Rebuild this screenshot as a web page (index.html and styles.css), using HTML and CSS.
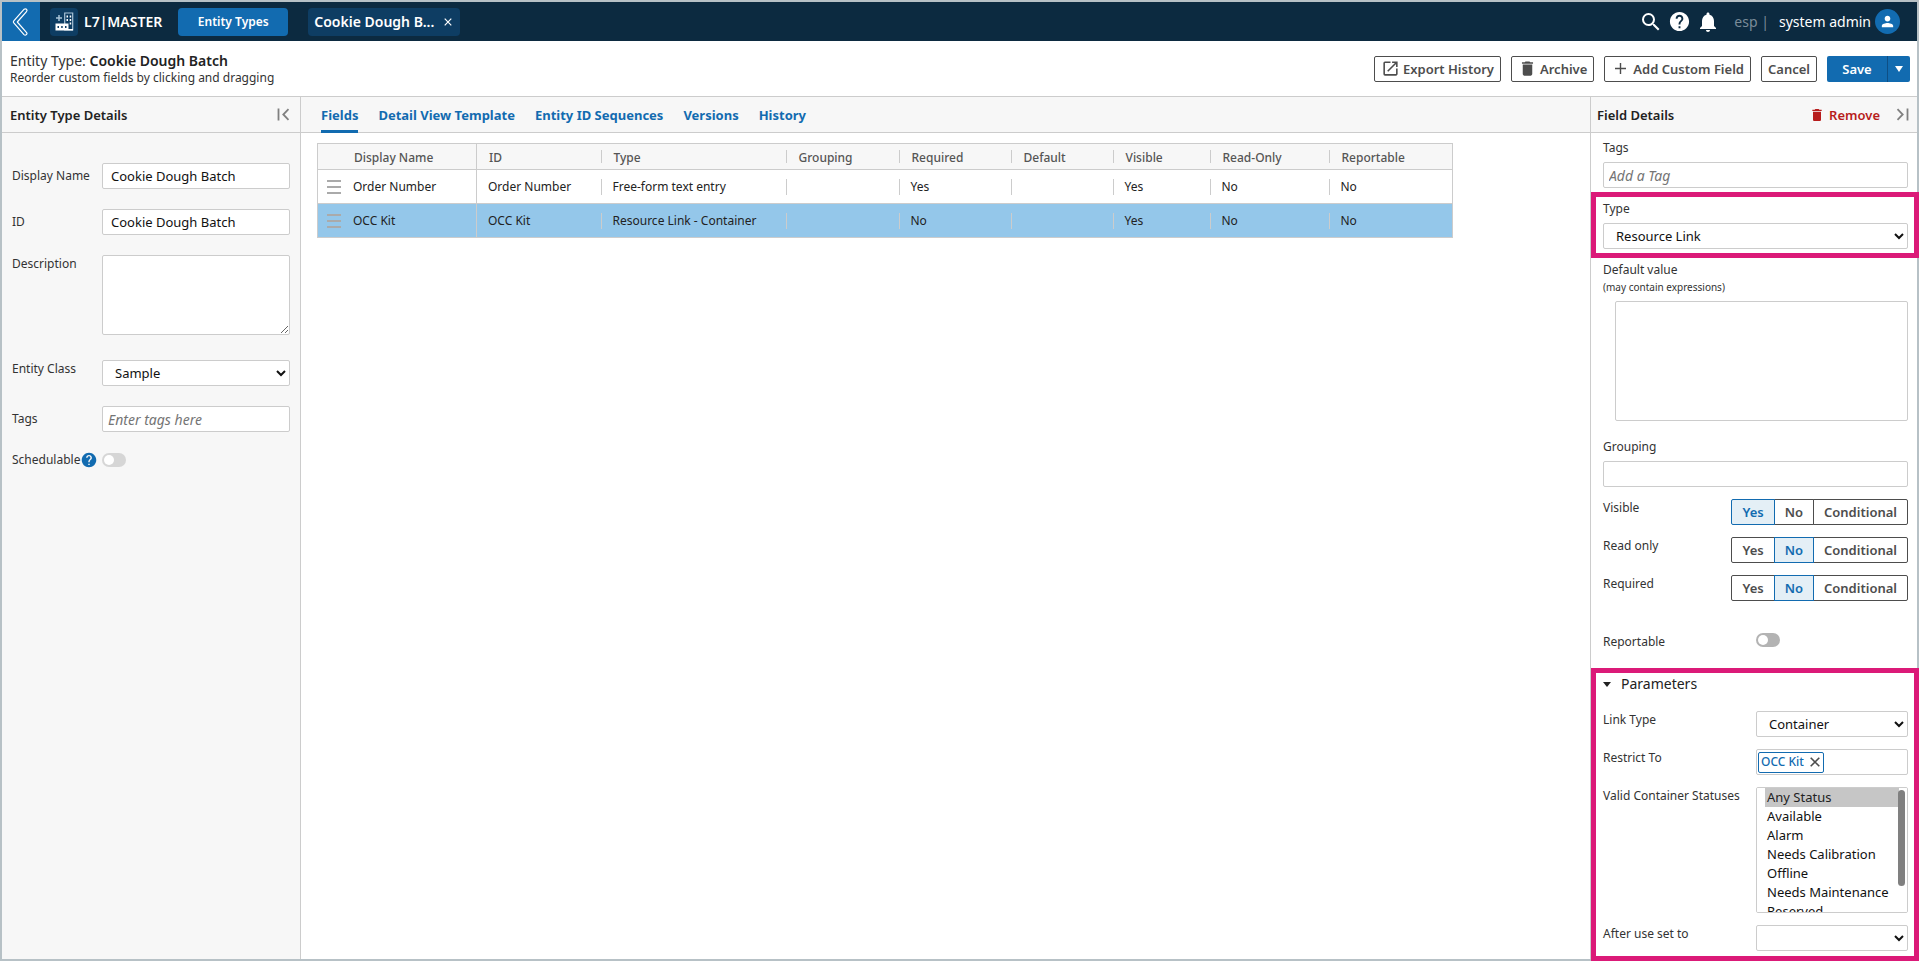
FILE: index.html
```html
<!DOCTYPE html>
<html lang="en">
<head>
<meta charset="utf-8">
<title>Entity Type: Cookie Dough Batch</title>
<link rel="stylesheet" href="styles.css">
</head>
<body>
<div class="app">
  <header class="topbar">
    <button class="back" aria-label="Back">
      <svg width="18" height="30" viewBox="0 0 18 30" fill="none" stroke="#fff" stroke-width="1.200" stroke-linejoin="round"><path d="M12.2 2.2 1.8 13.8q-.9 1 0 2.1L12 27.6q1.200 1 2.400 0t0-2.300L5.300 15 14.500 4.600q1.100-1.300 0-2.300t-2.300-.1Z"/></svg>
    </button>
    <span class="brand-icon">
      <svg width="19" height="19" viewBox="0 0 19 19"><path d="M1 6h6M4 3v6" stroke="#a9c4d8" stroke-width="1.500" fill="none"/><path d="M9.700 1h8v17h-8z" fill="none" stroke="#a9c4d8" stroke-width="1.200"/><path fill="#fff" d="M11.500 3.500h1.500v2h-1.500zM14.700 3.500h1.500v2h-1.500zM11.500 7h1.500v2h-1.500zM14.700 7h1.500v2h-1.500zM14.700 10.500h1.500v2h-1.500z"/><path d="M.5 11.500h13v7H.5zM13 17h5v1.500h-5z" fill="#fff"/><path fill="#0e3d63" d="M2.500 14h1.500v2H2.500zM6.200 14h1.500v2H6.200zM10 14h1.500v2H10z"/></svg>
    </span>
    <span class="brand">L7|MASTER</span>
    <button class="nav-button">Entity Types</button>
    <div class="nav-tab"><span>Cookie Dough B...</span><button class="tab-close" aria-label="Close tab"><svg width="8" height="8" viewBox="0 0 8 8" stroke="#fff" stroke-width="1.200"><path d="M.7.700l6.600 6.600M7.300.700.700 7.300"/></svg></button></div>
    <div class="top-actions">
      <button class="icon-button" aria-label="Search"><svg width="24" height="24" viewBox="0 0 24 24" fill="#fff"><path d="M15.500 14h-.79l-.28-.27A6.471 6.471 0 0 0 16 9.500 6.500 6.500 0 1 0 9.500 16c1.610 0 3.090-.59 4.230-1.570l.27.28v.79l5 4.990L20.490 19l-4.990-5zm-6 0C7.010 14 5 11.990 5 9.500S7.010 5 9.500 5 14 7.010 14 9.500 11.990 14 9.500 14z"/></svg></button>
      <button class="icon-button" aria-label="Help"><svg width="23" height="23" viewBox="0 0 24 24" fill="#fff"><path d="M12 2C6.480 2 2 6.480 2 12s4.480 10 10 10 10-4.480 10-10S17.520 2 12 2zm1 17h-2v-2h2v2zm2.070-7.750-.9.920C13.450 12.900 13 13.500 13 15h-2v-.5c0-1.100.45-2.100 1.170-2.830l1.240-1.260c.37-.36.59-.86.59-1.410 0-1.100-.9-2-2-2s-2 .9-2 2H8c0-2.210 1.790-4 4-4s4 1.790 4 4c0 .88-.36 1.680-.93 2.250z"/></svg></button>
      <button class="icon-button" aria-label="Notifications"><svg width="24" height="24" viewBox="0 0 24 24" fill="#fff"><path d="M12 22c1.100 0 2-.9 2-2h-4c0 1.100.89 2 2 2zm6-6v-5c0-3.070-1.640-5.640-4.500-6.320V4c0-.83-.67-1.500-1.500-1.500s-1.500.67-1.500 1.500v.68C7.630 5.360 6 7.920 6 11v5l-2 2v1h16v-1l-2-2z"/></svg></button>
      <span class="tenant">esp |</span>
      <span class="user">system admin</span>
      <span class="avatar"><svg width="17" height="17" viewBox="0 0 24 24" fill="#fff"><path d="M12 12c2.210 0 4-1.790 4-4s-1.790-4-4-4-4 1.790-4 4 1.790 4 4 4zm0 2c-2.670 0-8 1.340-8 4v2h16v-2c0-2.660-5.330-4-8-4z"/></svg></span>
    </div>
  </header>

  <section class="page-head">
    <div>
      <h1 class="page-title">Entity Type: <strong>Cookie Dough Batch</strong></h1>
      <p class="page-hint">Reorder custom fields by clicking and dragging</p>
    </div>
    <div class="page-actions">
      <button class="button"><svg width="19" height="19" viewBox="0 0 24 24" fill="#4d4d4d"><path d="M19 19H5V5h7V3H5a2 2 0 0 0-2 2v14a2 2 0 0 0 2 2h14c1.100 0 2-.9 2-2v-7h-2v7zM14 3v2h3.590l-9.830 9.830 1.410 1.410L19 6.410V10h2V3h-7z"/></svg>Export History</button>
      <button class="button"><svg width="19" height="19" viewBox="0 0 24 24" fill="#4d4d4d"><path d="M6 19c0 1.100.9 2 2 2h8c1.100 0 2-.9 2-2V7H6v12zM19 4h-3.500l-1-1h-5l-1 1H5v2h14V4z"/></svg>Archive</button>
      <button class="button"><svg width="19" height="19" viewBox="0 0 19 19" stroke="#4d4d4d" stroke-width="1.400"><path d="M9.500 4v11M4 9.500h11"/></svg>Add Custom Field</button>
      <button class="button">Cancel</button>
      <div class="split"><button class="save">Save</button><button class="save-more" aria-label="More save options"><svg width="8" height="6" viewBox="0 0 8 6" fill="#fff"><path d="M0 0h8L4 6z"/></svg></button></div>
    </div>
  </section>

  <main class="columns">
    <aside class="details">
      <div class="bar"><h2 class="bar-title">Entity Type Details</h2>
        <button class="icon-button" aria-label="Collapse panel"><svg width="13" height="13" viewBox="0 0 13 13" fill="none" stroke="#808080" stroke-width="1.800"><path d="M1.500.500v12M11.500 1.200 6.300 6.500l5.200 5.300"/></svg></button></div>
      <form class="details-form">
        <label for="name">Display Name</label><input class="field" id="name" value="Cookie Dough Batch">
        <label for="eid">ID</label><input class="field" id="eid" value="Cookie Dough Batch">
        <label class="top" for="desc">Description</label><textarea class="field desc" id="desc"></textarea>
        <label class="top" for="class">Entity Class</label><select class="field" id="class"><option>Sample</option></select>
        <label for="tags">Tags</label><input class="field tag-input" id="tags" placeholder="Enter tags here">
        <label class="with-help" for="sched">Schedulable<svg width="16" height="16" viewBox="1 1 22 22" fill="#126bb0"><path d="M12 2C6.480 2 2 6.480 2 12s4.480 10 10 10 10-4.480 10-10S17.520 2 12 2zm1 17h-2v-2h2v2zm2.070-7.750-.9.920C13.450 12.900 13 13.500 13 15h-2v-.5c0-1.100.45-2.100 1.170-2.830l1.240-1.260c.37-.36.59-.86.59-1.410 0-1.100-.9-2-2-2s-2 .9-2 2H8c0-2.210 1.790-4 4-4s4 1.790 4 4c0 .88-.36 1.680-.93 2.250z"/></svg></label><input class="toggle light" id="sched" type="checkbox">
      </form>
    </aside>

    <section class="content">
      <nav class="bar tabs">
        <a class="tab active" href="#fields">Fields</a>
        <a class="tab" href="#detail">Detail View Template</a>
        <a class="tab" href="#sequences">Entity ID Sequences</a>
        <a class="tab" href="#versions">Versions</a>
        <a class="tab" href="#history">History</a>
      </nav>
      <div class="grid-wrap">
        <table class="grid">
          <colgroup><col class="c-name"><col class="c-id"><col class="c-type"><col class="c-group"><col class="c-req"><col class="c-def"><col class="c-vis"><col class="c-ro"><col class="c-rep"></colgroup>
          <thead><tr><th>Display Name</th><th>ID</th><th>Type</th><th>Grouping</th><th>Required</th><th>Default</th><th>Visible</th><th>Read-Only</th><th>Reportable</th></tr></thead>
          <tbody>
            <tr><td><div class="name-cell"><span class="handle"></span>Order Number</div></td><td>Order Number</td><td>Free-form text entry</td><td></td><td>Yes</td><td></td><td>Yes</td><td>No</td><td>No</td></tr>
            <tr class="selected"><td><div class="name-cell"><span class="handle"></span>OCC Kit</div></td><td>OCC Kit</td><td>Resource Link - Container</td><td></td><td>No</td><td></td><td>Yes</td><td>No</td><td>No</td></tr>
          </tbody>
        </table>
      </div>
    </section>

    <aside class="inspector">
      <div class="bar"><h2 class="bar-title">Field Details</h2>
        <button class="remove"><svg width="16" height="16" viewBox="0 0 24 24" fill="#b71c1c"><path d="M6 19c0 1.100.9 2 2 2h8c1.100 0 2-.9 2-2V7H6v12zM19 4h-3.500l-1-1h-5l-1 1H5v2h14V4z"/></svg>Remove</button>
        <button class="icon-button" aria-label="Collapse panel"><svg width="13" height="13" viewBox="0 0 13 13" fill="none" stroke="#808080" stroke-width="1.800"><path d="M11.500.500v12M1.500 1.200l5.200 5.300-5.200 5.300"/></svg></button></div>
      <form class="inspector-form">
        <div class="group"><label for="ftags">Tags</label><input class="field tag-input" id="ftags" placeholder="Add a Tag"></div>
        <div class="group marked"><label for="ftype">Type</label><select class="field" id="ftype"><option>Resource Link</option></select></div>
        <div class="group default-group"><label for="fdef">Default value<small>(may contain expressions)</small></label><div class="indent"><textarea class="field default-value" id="fdef"></textarea></div></div>
        <div class="group grouping"><label for="fgroup">Grouping</label><input class="field" id="fgroup"></div>
        <div class="row"><span class="row-label">Visible</span><div class="segmented"><button type="button" class="on">Yes</button><button type="button">No</button><button type="button">Conditional</button></div></div>
        <div class="row"><span class="row-label">Read only</span><div class="segmented"><button type="button">Yes</button><button type="button" class="on">No</button><button type="button">Conditional</button></div></div>
        <div class="row"><span class="row-label">Required</span><div class="segmented"><button type="button">Yes</button><button type="button" class="on">No</button><button type="button">Conditional</button></div></div>
        <div class="row report-row"><label class="row-label" for="frep">Reportable</label><div class="value"><input class="toggle" id="frep" type="checkbox"></div></div>
        <section class="marked params">
          <h3 class="params-title"><svg width="8" height="5" viewBox="0 0 8 5" fill="#222"><path d="M0 0h8L4 5z"/></svg>Parameters</h3>
          <div class="row"><label class="row-label" for="ltype">Link Type</label><select class="field value" id="ltype"><option>Container</option></select></div>
          <div class="row"><label class="row-label" for="restrict">Restrict To</label><div class="field value chips"><span class="chip">OCC Kit<button type="button" class="chip-x" aria-label="Remove OCC Kit"><svg width="10" height="10" viewBox="0 0 10 10" stroke="#4d4d4d" stroke-width="1.600"><path d="M.7.700l8.600 8.600M9.300.700.700 9.300"/></svg></button></span><input class="chip-input" id="restrict"></div></div>
          <div class="row"><label class="row-label" for="stat">Valid Container Statuses</label><div class="value list-box"><select class="field list" id="stat" multiple><option selected>Any Status</option><option>Available</option><option>Alarm</option><option>Needs Calibration</option><option>Offline</option><option>Needs Maintenance</option><option>Reserved</option></select></div></div>
          <div class="row"><label class="row-label" for="after">After use set to</label><select class="field value" id="after"><option></option></select></div>
        </section>
      </form>
    </aside>
  </main>
</div>
</body>
</html>
```
FILE: styles.css
```css
*, *::before, *::after { box-sizing: border-box; }
body { margin: 0; font: 12px/16px "Noto Sans", "Open Sans", sans-serif; color: #333; background: #fff; }
button, input, select, textarea { font: inherit; color: inherit; margin: 0; }
button { border: 0; padding: 0; background: none; cursor: pointer; display: inline-flex; align-items: center; justify-content: center; white-space: nowrap; }
svg { flex: none; display: block; }
h1, h2, h3, p { margin: 0; font: inherit; }
a { text-decoration: none; }

.app { min-height: 100vh; border: 2px solid #b7c1c6; display: flex; flex-direction: column; }

.topbar { height: 39px; background: #0c2a40; color: #fff; display: flex; align-items: center; font-size: 14px; }
.back { width: 38px; align-self: stretch; background: #126bb0; }
.brand-icon { width: 28px; height: 28px; margin-left: 10px; border-radius: 4px; background: #0e3d63; display: flex; align-items: center; justify-content: center; }
.brand { margin: 0 16px 0 6px; font-weight: 600; }
.nav-button { width: 110px; height: 28px; border-radius: 4px; background: #126bb0; font-size: 12px; font-weight: 600; }
.nav-tab { width: 152px; height: 28px; margin-left: 20px; padding: 0 8px 0 6px; border-radius: 4px; background: #0e3d63; display: flex; align-items: center; justify-content: space-between; font-size: 14px; font-weight: 600; white-space: nowrap; }
.top-actions { margin-left: auto; padding-right: 17px; display: flex; align-items: center; gap: 4px; white-space: nowrap; }
.top-actions .icon-button { margin-left: 1px; }
.tenant { margin: 0 6px 0 10px; color: #7a8c99; }
.avatar { width: 25px; height: 25px; border-radius: 50%; background: #126bb0; display: flex; align-items: center; justify-content: center; }

.page-head { height: 55px; padding: 0 7px 0 8px; display: flex; align-items: center; justify-content: space-between; }
.page-title { font-size: 14px; line-height: 18px; }
.page-title strong { font-weight: 600; color: #222; }
.page-actions { display: flex; gap: 10px; }
.button { height: 26px; padding: 0 6px; gap: 3px; border: 1px solid #4d4d4d; border-radius: 2px; background: #fff; color: #4d4d4d; font-size: 13px; font-weight: 600; }
.split { display: flex; color: #fff; font-size: 13px; font-weight: 600; }
.save { width: 60px; height: 26px; border-radius: 2px 0 0 2px; background: #126bb0; }
.save-more { width: 23px; height: 26px; border-left: 1px solid #0e4f85; border-radius: 0 2px 2px 0; background: #126bb0; }

.columns { flex: 1; display: flex; border-top: 1px solid #ccc; }
.details { width: 299px; flex: none; background: #f7f7f7; border-right: 1px solid #ccc; }
.content { flex: 1; min-width: 0; }
.inspector { width: 327px; flex: none; border-left: 1px solid #ccc; }
.bar { height: 36px; padding: 0 10px 0 8px; border-bottom: 1px solid #ccc; background: #f7f7f7; display: flex; align-items: center; justify-content: space-between; }
.inspector .bar { padding: 0 8px 0 6px; }
.bar-title { font-size: 13px; font-weight: 600; color: #222; }
.remove { margin-left: auto; margin-right: 16px; gap: 4px; color: #b71c1c; font-size: 13px; font-weight: 600; }

.tabs { height: 36px; padding: 0 20px; justify-content: flex-start; align-items: stretch; gap: 20px; }
.tab { color: #126bb0; font-size: 13px; font-weight: 700; line-height: 36px; white-space: nowrap; }
.tab.active { border-bottom: 3px solid #126bb0; margin-bottom: -1px; }

.field { width: 100%; height: 26px; padding: 0 8px; border: 1px solid #ccc; border-radius: 2px; background: #fff; color: #111; font-size: 13px; outline: 0; }
textarea.field { display: block; resize: none; }
.tag-input { padding: 0 5px; font-size: 14px; }
.tag-input::placeholder { font-style: italic; color: #757575; }

.details-form { padding: 30px 10px 0; display: grid; grid-template-columns: 90px 1fr; row-gap: 20px; align-items: center; }
.details-form label { white-space: nowrap; }
.details-form .top { align-self: start; padding-top: 1px; }
.details-form textarea.desc { height: 80px; margin-bottom: 5px; resize: vertical; }
.with-help { display: flex; align-items: center; gap: 1px; }

.toggle { appearance: none; width: 24px; height: 14px; border-radius: 7px; padding: 2px; background: #b3b3b3; }
.toggle::before { content: ""; display: block; width: 10px; height: 10px; border-radius: 50%; background: #fff; }
.toggle.light { background: #d6d6d6; }

.grid-wrap { padding: 10px 16px; }
.grid { width: 1136px; max-width: 100%; table-layout: fixed; border-collapse: collapse; border: 1px solid #ccc; text-align: left; color: #222; }
.grid th { height: 26px; padding: 2px 0 0 13px; background: #f7f7f7 linear-gradient(#ccc, #ccc) left center / 1px 13px no-repeat; color: #555; font-weight: 500; }
.grid td { height: 34px; padding: 0 0 0 12px; background: linear-gradient(#ccc, #ccc) left center / 1px 16px no-repeat; }
.grid tr { border-top: 1px solid #ccc; }
.grid th:first-child { padding-left: 36px; background-image: none; }
.grid td:first-child { padding-left: 9px; background-image: none; }
.grid th:first-child, .grid td:first-child { border-right: 1px solid #ccc; }
.grid th:nth-child(2) { padding-left: 12px; background-image: none; }
.grid td:nth-child(2) { padding-left: 11px; background-image: none; }
.selected { background: #94c7ea; }
.c-name { width: 159px; } .c-id { width: 124px; } .c-type { width: 185px; } .c-group { width: 113px; } .c-req { width: 112px; }
.c-def { width: 102px; } .c-vis { width: 97px; } .c-ro { width: 119px; } .c-rep { width: 124px; }
.name-cell { display: flex; align-items: center; gap: 12px; }
.handle { width: 14px; height: 14px; border: solid #aaa; border-width: 2px 0; background: linear-gradient(#aaa, #aaa) center / 100% 2px no-repeat; }

.inspector-form { padding: 7px 9px 0 12px; }
.group { margin-bottom: 13px; }
.group > label { display: block; margin-bottom: 6px; }
.group small { display: block; font-size: 10px; line-height: 18px; }
.default-group { margin-bottom: 18px; }
.default-group > label { margin-bottom: 5px; }
.indent { padding-left: 12px; }
.default-value.field { height: 120px; }
.grouping { margin-bottom: 12px; }
.row { display: flex; justify-content: space-between; align-items: flex-start; margin-bottom: 12px; }
.row-label { padding-top: 1px; }
.value { width: 152px; flex: none; }
.segmented { display: flex; }
.segmented button { height: 26px; padding: 0 10px; border: 1px solid #4d4d4d; color: #4d4d4d; background: #fff; font-size: 13px; font-weight: 600; margin-left: -1px; }
.segmented button:first-child { border-radius: 2px 0 0 2px; }
.segmented button:last-child { border-radius: 0 2px 2px 0; }
.segmented .on { z-index: 1; border-color: #126bb0; color: #126bb0; background: #e4eff6; }
.report-row { margin: 32px 0 24px; }
.report-row .value { display: flex; }

.marked { position: relative; }
.marked::after { content: ""; position: absolute; inset: -9px -11px -9px -12px; border: 5px solid #db1a78; pointer-events: none; }
.params::after { top: -6px; bottom: -2px; }
.params-title { display: flex; align-items: center; gap: 10px; font-size: 14px; line-height: 20px; margin-bottom: 17px; color: #222; }
.params .row:last-child { margin-bottom: 0; padding-bottom: 8px; }
.chips { display: flex; align-items: center; padding: 0 1px; }
.chip { height: 21px; padding: 0 3px 0 2px; border: 1px solid #126bb0; border-radius: 2px; color: #126bb0; font-size: 12px; font-weight: 500; display: flex; align-items: center; gap: 6px; white-space: nowrap; }
.chip-input { flex: 1; min-width: 0; border: 0; outline: 0; background: none; }
.list-box { position: relative; }
.list-box::after { content: ""; position: absolute; top: 3px; right: 3px; width: 7px; height: 96px; border-radius: 4px; background: #808080; pointer-events: none; }
select.list { display: block; height: 126px; padding: 0 8px; overflow-y: scroll; scrollbar-width: none; }
.list option { min-height: 19px; height: 19px; padding: 0 2px; line-height: 19px; }
.list option:checked { background: #c6c6c6 linear-gradient(#c6c6c6, #c6c6c6); color: #222; }
```
